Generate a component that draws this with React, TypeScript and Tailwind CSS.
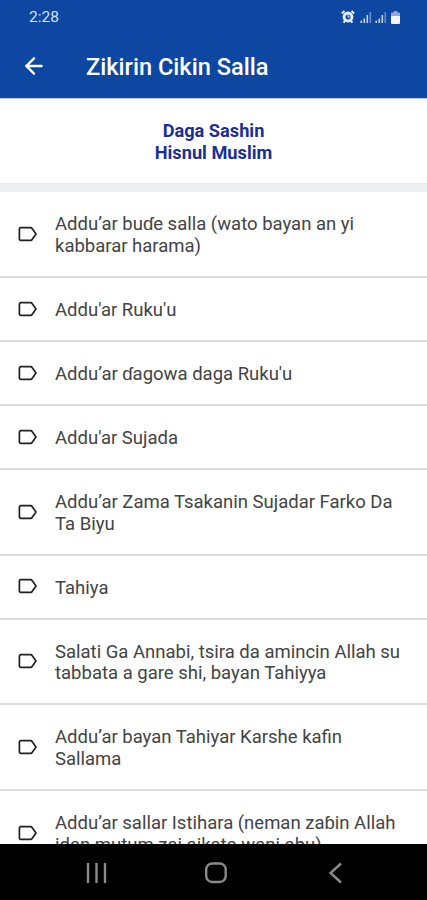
import { ArrowLeft } from "lucide-react";

const items: string[][] = [
  ["Addu’ar buɗe salla (wato bayan an yi", "kabbarar harama)"],
  ["Addu'ar Ruku'u"],
  ["Addu’ar ɗagowa daga Ruku'u"],
  ["Addu'ar Sujada"],
  ["Addu’ar Zama Tsakanin Sujadar Farko Da", "Ta Biyu"],
  ["Tahiya"],
  ["Salati Ga Annabi, tsira da amincin Allah su", "tabbata a gare shi, bayan Tahiyya"],
  ["Addu’ar bayan Tahiyar Karshe kafin", "Sallama"],
  ["Addu’ar sallar Istihara (neman zaɓin Allah", "idan mutum zai aikata wani abu)"],
];

function LabelIcon() {
  return (
    <svg width="20" height="16" viewBox="0 0 20 16" fill="none" className="shrink-0">
      <path
        d="M2.700 1.700h10c.6 0 1.100.3 1.400.8L18 8l-3.900 5.500c-.3.5-.8.8-1.400.8h-10c-.8 0-1.300-.5-1.300-1.200V2.900c0-.7.500-1.200 1.300-1.200Z"
        stroke="#202124"
        strokeWidth="1.7"
      />
    </svg>
  );
}

function AlarmIcon() {
  return (
    <svg width="14" height="14" viewBox="0 0 14 14" fill="none">
      <path
        d="M.8 3.500 3.500 1M13.200 3.500 10.500 1M2.500 12.500l1.800-1.800M11.500 12.500 9.700 10.700"
        stroke="#e8effc"
        strokeWidth="2"
      />
      <circle cx="7" cy="7" r="4" stroke="#e8effc" strokeWidth="2.800" />
      <path d="M7 4.800V7h1.800" stroke="#e8effc" strokeWidth="1" />
    </svg>
  );
}

function SignalIcon() {
  return (
    <svg width="12" height="12" viewBox="0 0 12 12" fill="#c3d3ef">
      <path d="M.5 9.500h1.600V12H.5zM3.500 7.500h1.600V12H3.500zM6.500 4h1.600v8H6.500z" />
      <path d="M9.500 1h1.600v11H9.500z" opacity=".5" />
    </svg>
  );
}

function BatteryIcon() {
  return (
    <svg width="9" height="13" viewBox="0 0 9 13">
      <path d="M2.800 0h3.400v1.500H8q1 0 1 1V5H0V2.500q0-1 1-1h1.800z" fill="#8ea9da" />
      <path d="M0 5h9v7q0 1-1 1H1q-1 0-1-1z" fill="#f2f6ff" />
    </svg>
  );
}

export default function App() {
  return (
    <div className="flex h-[900px] w-[427px] flex-col overflow-hidden bg-white font-['Roboto',sans-serif]">
      {/* App bar */}
      <header className="h-[99px] shrink-0 border-b border-[#b9c9e4] bg-[#0d47a1] text-white">
        <div className="flex h-[34px] items-center justify-between pr-[27px] pl-[29px]">
          <span className="pt-[2px] text-[15.500px] text-[#d5e0f4]">2:28</span>
          <div className="flex items-center">
            <AlarmIcon />
            <div className="ml-[5px] flex gap-[3px]">
              <SignalIcon />
              <SignalIcon />
            </div>
            <div className="ml-[4px]">
              <BatteryIcon />
            </div>
          </div>
        </div>
        <div className="flex h-[64px] items-center pl-[21px]">
          <ArrowLeft className="h-[26px] w-[26px]" strokeWidth={2.2} />
          <h1 className="ml-[39px] pt-[4px] text-[23.600px] font-medium">Zikirin Cikin Salla</h1>
        </div>
      </header>

      {/* Source */}
      <div className="flex h-[93px] shrink-0 flex-col items-center justify-center border-b-[9px] border-[#eceff1] pt-[2px] text-center text-[18.200px] leading-[22px] font-bold text-[#1a2f94]">
        <p>Daga Sashin</p>
        <p>Hisnul Muslim</p>
      </div>

      <ul className="min-h-0 flex-1 overflow-hidden">
        {items.map((lines) => (
          <li
            key={lines[0]}
            className="flex items-center border-b-2 border-[#dcdfe0] pt-[22px] pb-[18.200px] pl-[18px]"
          >
            <div className="-mt-[4px]">
              <LabelIcon />
            </div>
            <div className="ml-[17px] text-[18.500px] leading-[21.800px] whitespace-nowrap text-[#424445]">
              {lines.map((line) => (
                <p key={line}>{line}</p>
              ))}
            </div>
          </li>
        ))}
      </ul>

      {/* System navigation */}
      <nav className="flex h-[56px] shrink-0 items-center bg-black">
        <svg width="427" height="56" viewBox="0 0 427 56" fill="none" stroke="#8b8b8b" strokeWidth="2.400">
          <path d="M88 19v20M96.500 19v20M105 19v20" />
          <rect x="206.200" y="19.500" width="19.500" height="18.500" rx="6" />
          <path d="m341 19.500-10.500 9.500L341 38.500" />
        </svg>
      </nav>
    </div>
  );
}
